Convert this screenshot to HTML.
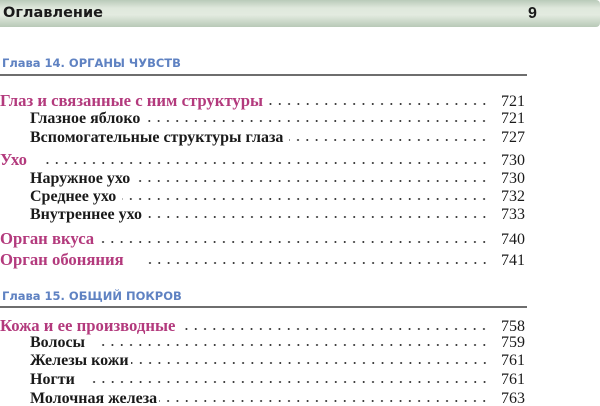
<!DOCTYPE html>
<html><head><meta charset="utf-8"><style>
html,body{margin:0;padding:0;background:#fff;width:600px;height:406px;overflow:hidden;position:relative}
.bar{position:absolute;left:0;top:0;width:600px;height:27px;background:linear-gradient(#b9cab9 0%,#dfe8dc 30%,#e3ebe0 55%,#b8c9b7 100%);border-radius:0 4px 4px 0}
.bar .t{position:absolute;left:3px;top:5px;font:bold 14.5px "DejaVu Sans","Liberation Sans",sans-serif;color:#1a1a1a}
.bar .n{position:absolute;left:528px;top:5px;font:bold 16px "Liberation Sans",sans-serif;color:#1a1a1a}
.ch{position:absolute;left:2px;font:bold 11.5px "DejaVu Sans","Liberation Sans",sans-serif;color:#5f82c2}
.hr{position:absolute;left:0;width:527px;height:2px;background:#6e6e6e}
.r{position:absolute;height:20px;display:flex;align-items:baseline;right:75px;font-family:"Liberation Serif",serif}
.r .x{font-weight:bold;white-space:nowrap;color:#1a1a1a;font-size:16px}
.r.m .x{color:#b33a7d;font-size:16.7px}
.r .d{flex:1;height:4px;margin:0 10px 0 6px;background:radial-gradient(circle,#333 0.8px,transparent 1.2px) repeat-x right center;background-size:9.3px 4px}
.r .p{font-size:16px;color:#1a1a1a;width:26px;text-align:right}
</style></head><body>
<div class="bar"><span class="t">Оглавление</span><span class="n">9</span></div>

<div class="ch" style="top:56px">Глава 14. ОРГАНЫ ЧУВСТВ</div>
<div class="hr" style="top:74px"></div>

<div class="r m" style="left:0;top:91px"><span class="x">Глаз и связанные с ним структуры</span><span class="d"></span><span class="p">721</span></div>
<div class="r" style="left:30px;top:110px"><span class="x">Глазное яблоко</span><span class="d"></span><span class="p">721</span></div>
<div class="r" style="left:30px;top:129px"><span class="x">Вспомогательные структуры глаза</span><span class="d"></span><span class="p">727</span></div>
<div class="r m" style="left:0;top:150px"><span class="x">Ухо</span><span class="d" style="margin-left:14px"></span><span class="p">730</span></div>
<div class="r" style="left:30px;top:170px"><span class="x">Наружное ухо</span><span class="d"></span><span class="p">730</span></div>
<div class="r" style="left:30px;top:188px"><span class="x">Среднее ухо</span><span class="d"></span><span class="p">732</span></div>
<div class="r" style="left:30px;top:206px"><span class="x">Внутреннее ухо</span><span class="d" style="margin-left:0"></span><span class="p">733</span></div>
<div class="r m" style="left:0;top:229px"><span class="x">Орган вкуса</span><span class="d"></span><span class="p">740</span></div>
<div class="r m" style="left:0;top:250px"><span class="x">Орган обоняния</span><span class="d" style="margin-left:18px"></span><span class="p">741</span></div>

<div class="ch" style="top:289px">Глава 15. ОБЩИЙ ПОКРОВ</div>
<div class="hr" style="top:306px"></div>

<div class="r m" style="left:0;top:316px"><span class="x">Кожа и ее производные</span><span class="d"></span><span class="p">758</span></div>
<div class="r" style="left:30px;top:334px"><span class="x">Волосы</span><span class="d" style="margin-left:14px"></span><span class="p">759</span></div>
<div class="r" style="left:30px;top:352px"><span class="x">Железы кожи</span><span class="d" style="margin-left:2px"></span><span class="p">761</span></div>
<div class="r" style="left:30px;top:371px"><span class="x">Ногти</span><span class="d" style="margin-left:12px"></span><span class="p">761</span></div>
<div class="r" style="left:30px;top:390px"><span class="x">Молочная железа</span><span class="d" style="margin-left:2px"></span><span class="p">763</span></div>
</body></html>
